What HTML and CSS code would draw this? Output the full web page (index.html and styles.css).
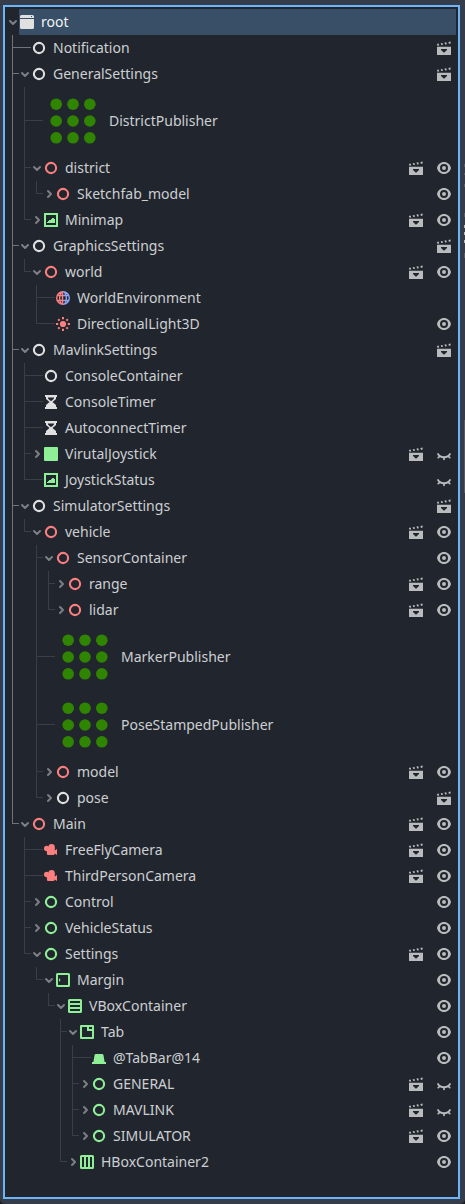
FILE: index.html
```html
<!DOCTYPE html>
<html lang="en">
<head>
<meta charset="utf-8">
<title>Scene</title>
<link rel="stylesheet" href="styles.css">
</head>
<body>
<svg class="sprites" width="0" height="0">
  <symbol id="down" viewBox="0 0 12 12"><path d="M3 5l3 3 3-3" fill="none" stroke="#7c7f84" stroke-width="2" stroke-linecap="round" stroke-linejoin="round"/></symbol>
  <symbol id="right" viewBox="0 0 12 12"><path d="M5 3l3 3-3 3" fill="none" stroke="#7c7f84" stroke-width="2" stroke-linecap="round" stroke-linejoin="round"/></symbol>
  <symbol id="node" viewBox="0 0 16 16"><circle cx="8" cy="8" r="5.100" fill="none" stroke="currentColor" stroke-width="2.100"/></symbol>
  <symbol id="window" viewBox="0 0 16 16"><path fill="currentColor" fill-rule="evenodd" d="M2.5 1h11A1.5 1.5 0 0 1 15 2.500V4H1V2.500A1.500 1.500 0 0 1 2.500 1zM12 2v1h1V2zM1 5h14v8.500a1.500 1.500 0 0 1-1.500 1.500h-11A1.500 1.500 0 0 1 1 13.500z"/></symbol>
  <symbol id="rect" viewBox="0 0 16 16"><rect x="1" y="1" width="14" height="14" rx="1" fill="currentColor"/></symbol>
  <symbol id="texture" viewBox="0 0 16 16"><path fill="currentColor" fill-rule="evenodd" d="M1 1v14h14V1zm2 2h10v10H3zm6 3v1H8v1H6v1H5v1H4v1h8V7h-1V6z"/></symbol>
  <symbol id="timer" viewBox="0 0 16 16"><path fill="currentColor" fill-rule="evenodd" d="M2 1v2h1v2l3.500 3L3 11v2H2v2h12v-2h-1v-2L9.500 8 13 5V3h1V1zm3 2.500h6v1L8.800 6.700H7.200L5 4.500z"/></symbol>
  <symbol id="world" viewBox="0 0 16 16"><g fill="none" stroke-width="1.400"><path stroke="#fc7f7f" d="M8 1.700a6.300 6.300 0 0 0 0 12.600M8 1.700a3.400 6.300 0 0 0 0 12.600M2.200 5.500H8M2.200 10.500H8M7.500 1.700v12.600"/><path stroke="#8da5f3" d="M8 1.700a6.300 6.300 0 0 1 0 12.600M8 1.700a3.400 6.300 0 0 1 0 12.600M8 5.500h5.800M8 10.500h5.800"/></g></symbol>
  <symbol id="sun" viewBox="0 0 16 16"><circle cx="8" cy="8" r="3.100" fill="currentColor"/><path stroke="currentColor" stroke-width="2" d="M8 1v2.200M8 12.800V15M1 8h2.200M12.800 8H15M3.200 3.200l1.400 1.400M11.400 11.400l1.400 1.400M12.800 3.200l-1.400 1.400M4.600 11.400l-1.400 1.400"/></symbol>
  <symbol id="camera" viewBox="0 0 16 16"><g fill="currentColor"><circle cx="3.700" cy="6.400" r="2.700"/><circle cx="8.600" cy="5.200" r="3.200"/><path d="M3.500 6H11.700v2.500L14 7v6l-2.500-1.500V12a1 1 0 0 1-1 1h-5.500a1 1 0 0 1-1-1z"/></g></symbol>
  <symbol id="margin" viewBox="0 0 16 16"><rect x="2" y="2" width="12" height="12" rx=".5" fill="none" stroke="currentColor" stroke-width="2"/><path fill="currentColor" d="M4 6v4l1.500-2z"/></symbol>
  <symbol id="vbox" viewBox="0 0 16 16"><rect x="2" y="2" width="12" height="12" rx=".5" fill="none" stroke="currentColor" stroke-width="2"/><path fill="currentColor" d="M3 5h10v2H3zM3 9h10v2H3z"/></symbol>
  <symbol id="hbox" viewBox="0 0 16 16"><rect x="2" y="2" width="12" height="12" rx=".5" fill="none" stroke="currentColor" stroke-width="2"/><path fill="currentColor" d="M5 3h2v10H5zM9 3h2v10H9z"/></symbol>
  <symbol id="tab" viewBox="0 0 16 16"><path fill="currentColor" fill-rule="evenodd" d="M2 1h12a1 1 0 0 1 1 1v12a1 1 0 0 1-1 1H2a1 1 0 0 1-1-1V2a1 1 0 0 1 1-1zm1 2v10h10V7H8V3zm7 0v2h3V3z"/></symbol>
  <symbol id="tabbar" viewBox="0 0 16 16"><path fill="currentColor" d="M5 4h6a1.500 1.500 0 0 1 1.500 1.200L13.600 12H15v2H1v-2h1.400l1.100-6.800A1.500 1.500 0 0 1 5 4z"/></symbol>
  <symbol id="dots" viewBox="0 0 60 60"><g fill="#308500"><circle cx="13.200" cy="13.200" r="5.800"/><circle cx="30" cy="13.200" r="5.800"/><circle cx="46.800" cy="13.200" r="5.800"/><circle cx="13.200" cy="30" r="5.800"/><circle cx="30" cy="30" r="5.800"/><circle cx="46.800" cy="30" r="5.800"/><circle cx="13.200" cy="46.800" r="5.800"/><circle cx="30" cy="46.800" r="5.800"/><circle cx="46.800" cy="46.800" r="5.800"/></g></symbol>
  <symbol id="scene" viewBox="0 0 16 16"><path fill="currentColor" fill-rule="evenodd" d="M1 6.700h14v7.800a.5.500 0 0 1-.5.500h-13a.5.500 0 0 1-.5-.5zM5 9v1l2.600 2.600h.8L11 10V9zM.800 3.900l1.800-.3.600 1.900-1.600.3zM4.700 3.200l1.700-.3.700 1.900-1.800.3zM8.500 2.600l1.700-.3.700 1.900-1.800.3zM12.400 2l2.200-.4v2l-1.600.3z"/></symbol>
  <symbol id="eye" viewBox="0 0 16 16"><path fill="currentColor" fill-rule="evenodd" d="M8 2C4.500 2 1.800 4.500 1 8c.8 3.500 3.500 6 7 6s6.200-2.500 7-6c-.8-3.500-3.500-6-7-6zm0 2a4 4 0 0 1 0 8 4 4 0 0 1 0-8zm0 2a2 2 0 0 0 0 4 2 2 0 0 0 0-4z"/></symbol>
  <symbol id="shut" viewBox="0 0 16 16"><path fill="none" stroke="currentColor" stroke-width="1.800" stroke-linecap="round" d="M2 8c2.400 4.300 9.600 4.300 12 0M3.800 10.200L2.300 11.600M8 11.500v1.800M12.200 10.200l1.500 1.400"/></symbol>
</svg>

<main class="dock">
<ul class="tree">
<li>
  <div class="row"><svg class="toggle"><use href="#down"/></svg><div class="item selected"><svg class="icon"><use href="#window"/></svg><span class="name">root</span></div></div>
  <ul class="active">
    <li><div class="row leaf"><div class="item"><svg class="icon"><use href="#node"/></svg><span class="name">Notification</span><svg class="act"><use href="#scene"/></svg></div></div></li>
    <li><div class="row"><svg class="toggle"><use href="#down"/></svg><div class="item"><svg class="icon"><use href="#node"/></svg><span class="name">GeneralSettings</span><svg class="act"><use href="#scene"/></svg></div></div>
      <ul>
        <li class="tall"><div class="row leaf"><div class="item"><svg class="icon"><use href="#dots"/></svg><span class="name">DistrictPublisher</span></div></div></li>
        <li><div class="row"><svg class="toggle"><use href="#down"/></svg><div class="item"><svg class="icon red"><use href="#node"/></svg><span class="name">district</span><svg class="act"><use href="#scene"/></svg><svg class="act"><use href="#eye"/></svg></div></div>
          <ul>
            <li><div class="row"><svg class="toggle"><use href="#right"/></svg><div class="item"><svg class="icon red"><use href="#node"/></svg><span class="name">Sketchfab_model</span><svg class="act"><use href="#eye"/></svg></div></div></li>
          </ul>
        </li>
        <li><div class="row"><svg class="toggle"><use href="#right"/></svg><div class="item"><svg class="icon green"><use href="#texture"/></svg><span class="name">Minimap</span><svg class="act"><use href="#scene"/></svg><svg class="act"><use href="#eye"/></svg></div></div></li>
      </ul>
    </li>
    <li><div class="row"><svg class="toggle"><use href="#down"/></svg><div class="item"><svg class="icon"><use href="#node"/></svg><span class="name">GraphicsSettings</span><svg class="act"><use href="#scene"/></svg></div></div>
      <ul>
        <li><div class="row"><svg class="toggle"><use href="#down"/></svg><div class="item"><svg class="icon red"><use href="#node"/></svg><span class="name">world</span><svg class="act"><use href="#scene"/></svg><svg class="act"><use href="#eye"/></svg></div></div>
          <ul>
            <li><div class="row leaf"><div class="item"><svg class="icon"><use href="#world"/></svg><span class="name">WorldEnvironment</span></div></div></li>
            <li><div class="row leaf"><div class="item"><svg class="icon red"><use href="#sun"/></svg><span class="name">DirectionalLight3D</span><svg class="act"><use href="#eye"/></svg></div></div></li>
          </ul>
        </li>
      </ul>
    </li>
    <li><div class="row"><svg class="toggle"><use href="#down"/></svg><div class="item"><svg class="icon"><use href="#node"/></svg><span class="name">MavlinkSettings</span><svg class="act"><use href="#scene"/></svg></div></div>
      <ul>
        <li><div class="row leaf"><div class="item"><svg class="icon"><use href="#node"/></svg><span class="name">ConsoleContainer</span></div></div></li>
        <li><div class="row leaf"><div class="item"><svg class="icon"><use href="#timer"/></svg><span class="name">ConsoleTimer</span></div></div></li>
        <li><div class="row leaf"><div class="item"><svg class="icon"><use href="#timer"/></svg><span class="name">AutoconnectTimer</span></div></div></li>
        <li><div class="row"><svg class="toggle"><use href="#right"/></svg><div class="item"><svg class="icon green"><use href="#rect"/></svg><span class="name">VirutalJoystick</span><svg class="act"><use href="#scene"/></svg><svg class="act"><use href="#shut"/></svg></div></div></li>
        <li><div class="row leaf"><div class="item"><svg class="icon green"><use href="#texture"/></svg><span class="name">JoystickStatus</span><svg class="act"><use href="#shut"/></svg></div></div></li>
      </ul>
    </li>
    <li><div class="row"><svg class="toggle"><use href="#down"/></svg><div class="item"><svg class="icon"><use href="#node"/></svg><span class="name">SimulatorSettings</span><svg class="act"><use href="#scene"/></svg></div></div>
      <ul>
        <li><div class="row"><svg class="toggle"><use href="#down"/></svg><div class="item"><svg class="icon red"><use href="#node"/></svg><span class="name">vehicle</span><svg class="act"><use href="#scene"/></svg><svg class="act"><use href="#eye"/></svg></div></div>
          <ul>
            <li><div class="row"><svg class="toggle"><use href="#down"/></svg><div class="item"><svg class="icon red"><use href="#node"/></svg><span class="name">SensorContainer</span><svg class="act"><use href="#eye"/></svg></div></div>
              <ul>
                <li><div class="row"><svg class="toggle"><use href="#right"/></svg><div class="item"><svg class="icon red"><use href="#node"/></svg><span class="name">range</span><svg class="act"><use href="#scene"/></svg><svg class="act"><use href="#eye"/></svg></div></div></li>
                <li><div class="row"><svg class="toggle"><use href="#right"/></svg><div class="item"><svg class="icon red"><use href="#node"/></svg><span class="name">lidar</span><svg class="act"><use href="#scene"/></svg><svg class="act"><use href="#eye"/></svg></div></div></li>
              </ul>
            </li>
            <li class="tall"><div class="row leaf"><div class="item"><svg class="icon"><use href="#dots"/></svg><span class="name">MarkerPublisher</span></div></div></li>
            <li class="tall"><div class="row leaf"><div class="item"><svg class="icon"><use href="#dots"/></svg><span class="name">PoseStampedPublisher</span></div></div></li>
            <li><div class="row"><svg class="toggle"><use href="#right"/></svg><div class="item"><svg class="icon red"><use href="#node"/></svg><span class="name">model</span><svg class="act"><use href="#scene"/></svg><svg class="act"><use href="#eye"/></svg></div></div></li>
            <li><div class="row"><svg class="toggle"><use href="#right"/></svg><div class="item"><svg class="icon"><use href="#node"/></svg><span class="name">pose</span><svg class="act"><use href="#scene"/></svg></div></div></li>
          </ul>
        </li>
      </ul>
    </li>
    <li><div class="row"><svg class="toggle"><use href="#down"/></svg><div class="item"><svg class="icon red"><use href="#node"/></svg><span class="name">Main</span><svg class="act"><use href="#scene"/></svg><svg class="act"><use href="#eye"/></svg></div></div>
      <ul>
        <li><div class="row leaf"><div class="item"><svg class="icon red"><use href="#camera"/></svg><span class="name">FreeFlyCamera</span><svg class="act"><use href="#scene"/></svg><svg class="act"><use href="#eye"/></svg></div></div></li>
        <li><div class="row leaf"><div class="item"><svg class="icon red"><use href="#camera"/></svg><span class="name">ThirdPersonCamera</span><svg class="act"><use href="#scene"/></svg><svg class="act"><use href="#eye"/></svg></div></div></li>
        <li><div class="row"><svg class="toggle"><use href="#right"/></svg><div class="item"><svg class="icon green"><use href="#node"/></svg><span class="name">Control</span><svg class="act"><use href="#eye"/></svg></div></div></li>
        <li><div class="row"><svg class="toggle"><use href="#right"/></svg><div class="item"><svg class="icon green"><use href="#node"/></svg><span class="name">VehicleStatus</span><svg class="act"><use href="#eye"/></svg></div></div></li>
        <li><div class="row"><svg class="toggle"><use href="#down"/></svg><div class="item"><svg class="icon green"><use href="#node"/></svg><span class="name">Settings</span><svg class="act"><use href="#scene"/></svg><svg class="act"><use href="#eye"/></svg></div></div>
          <ul>
            <li><div class="row"><svg class="toggle"><use href="#down"/></svg><div class="item"><svg class="icon green"><use href="#margin"/></svg><span class="name">Margin</span><svg class="act"><use href="#eye"/></svg></div></div>
              <ul>
                <li><div class="row"><svg class="toggle"><use href="#down"/></svg><div class="item"><svg class="icon green"><use href="#vbox"/></svg><span class="name">VBoxContainer</span><svg class="act"><use href="#eye"/></svg></div></div>
                  <ul>
                    <li><div class="row"><svg class="toggle"><use href="#down"/></svg><div class="item"><svg class="icon green"><use href="#tab"/></svg><span class="name">Tab</span><svg class="act"><use href="#eye"/></svg></div></div>
                      <ul>
                        <li><div class="row leaf"><div class="item"><svg class="icon green"><use href="#tabbar"/></svg><span class="name">@TabBar@14</span><svg class="act"><use href="#eye"/></svg></div></div></li>
                        <li><div class="row"><svg class="toggle"><use href="#right"/></svg><div class="item"><svg class="icon green"><use href="#node"/></svg><span class="name">GENERAL</span><svg class="act"><use href="#scene"/></svg><svg class="act"><use href="#shut"/></svg></div></div></li>
                        <li><div class="row"><svg class="toggle"><use href="#right"/></svg><div class="item"><svg class="icon green"><use href="#node"/></svg><span class="name">MAVLINK</span><svg class="act"><use href="#scene"/></svg><svg class="act"><use href="#shut"/></svg></div></div></li>
                        <li><div class="row"><svg class="toggle"><use href="#right"/></svg><div class="item"><svg class="icon green"><use href="#node"/></svg><span class="name">SIMULATOR</span><svg class="act"><use href="#scene"/></svg><svg class="act"><use href="#eye"/></svg></div></div></li>
                      </ul>
                    </li>
                    <li><div class="row"><svg class="toggle"><use href="#right"/></svg><div class="item"><svg class="icon green"><use href="#hbox"/></svg><span class="name">HBoxContainer2</span><svg class="act"><use href="#eye"/></svg></div></div></li>
                  </ul>
                </li>
              </ul>
            </li>
          </ul>
        </li>
      </ul>
    </li>
  </ul>
</li>
</ul>
<div class="edge"></div>
</main>
</body>
</html>
```
FILE: styles.css
```css
* { box-sizing: border-box; }

body {
  margin: 0;
  background: #1a1c20;
  font-family: "Noto Sans", "Open Sans", sans-serif;
  font-size: 14px;
  color: #cdcfd2;
}

.sprites { display: block; }

.dock {
  display: flex;
  height: 1204px;
  padding: 5px 0 5px 3px;
  background: #363d4a;
  border-radius: 0 0 5px 5px;
}

ul {
  --line: #3a3f47;
  list-style: none;
  margin: 0 0 0 12px;
  padding: 0;
}

.tree {
  width: 457px;
  height: 1194px;
  margin: 0;
  padding: 2px 2px 0;
  border: 2px solid #6cb5f9;
  background: #21262e;
}

.tree > li > ul { margin-left: 5px; }
.active { --line: #6f737a; }

/* vertical guide along each branch, cut short at its last child */
ul ul > li {
  background: linear-gradient(var(--line), var(--line)) 0 0 / 1px 100% no-repeat;
}
ul ul > li:last-child { background-size: 1px 13px; }
ul ul > li.tall:last-child { background-size: 1px 34px; }

.row {
  display: flex;
  height: 26px;
  padding-left: 7px;
}
.tree > li > .row { padding-left: 0; }
ul ul > li > .row {
  background: linear-gradient(var(--line), var(--line)) 0 12px / 7px 1px no-repeat;
}
ul ul > li > .row.leaf { padding-left: 19px; background-size: 19px 1px; }
ul ul > li.tall > .row { height: 68px; background-position: 0 33px; }

.toggle {
  flex: none;
  width: 12px;
  height: 12px;
  margin-top: 7px;
}

.item {
  flex: 1;
  display: flex;
  align-items: center;
  padding-right: 4px;
}
.selected { background: #384f67; color: #f1f3f5; border-radius: 1px; }

.icon {
  flex: none;
  width: 16px;
  height: 16px;
  color: #e0e0e0;
}
.red { color: #fc7f7f; }
.green { color: #8eef97; }
.tall .icon { width: 60px; height: 60px; }

.name {
  flex: 1;
  padding-left: 6px;
  line-height: 20px;
  white-space: nowrap;
}

.act {
  flex: none;
  width: 16px;
  height: 16px;
  margin-left: 12px;
  color: #b9bbbd;
}

/* sliver of the neighbouring dock at the window's right side */
.edge {
  width: 1px;
  margin: 159px 0 0 auto;
  background:
    linear-gradient(#565b65, #565b65) 0 0 / 1px 3px,
    linear-gradient(#565b65, #565b65) 0 9px / 1px 2px,
    linear-gradient(#565b65, #565b65) 0 20px / 1px 3px,
    linear-gradient(#565b65, #565b65) 0 49px / 1px 4px,
    linear-gradient(#b9bbbd, #b9bbbd) 0 61px / 1px 3px,
    linear-gradient(#b9bbbd, #b9bbbd) 0 68px / 1px 3px,
    linear-gradient(#b9bbbd, #b9bbbd) 0 76px / 1px 3px,
    linear-gradient(#565b65, #565b65) 0 89px / 1px 5px,
    linear-gradient(#565b65, #565b65) 0 256px / 1px 73px;
  background-repeat: no-repeat;
}
```
